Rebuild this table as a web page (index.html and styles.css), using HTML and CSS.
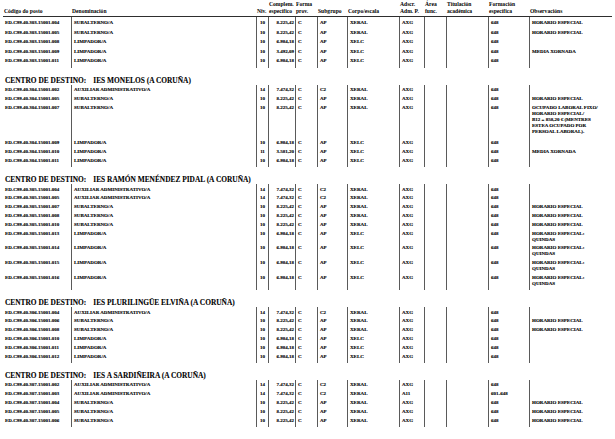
FILE: index.html
```html
<!DOCTYPE html>
<html lang="gl">
<head>
<meta charset="utf-8">
<title>Relación de postos</title>
<link rel="stylesheet" href="styles.css">
</head>
<body>
<div class="page">
  <table class="grid head">
    <colgroup>
      <col class="c1"><col class="c2"><col class="c3"><col class="c4"><col class="c5"><col class="c6"><col class="c7"><col class="c8"><col class="c9"><col class="c10"><col class="c11"><col class="c12">
    </colgroup>
    <tr>
      <th><br>Código do posto</th>
      <th><br>Denominación</th>
      <th><br>Niv.</th>
      <th>Complem.<br>específico</th>
      <th>Forma<br>prov.</th>
      <th><br>Subgrupo</th>
      <th><br>Corpo/escala</th>
      <th>Adscr.<br>Adm. P.</th>
      <th>Área<br>func.</th>
      <th>Titulación<br>académica</th>
      <th>Formación<br>específica</th>
      <th><br>Observacións</th>
    </tr>
  </table>

  <table class="grid data first">
    <colgroup>
      <col class="c1"><col class="c2"><col class="c3"><col class="c4"><col class="c5"><col class="c6"><col class="c7"><col class="c8"><col class="c9"><col class="c10"><col class="c11"><col class="c12">
    </colgroup>
    <tr><td>ED.C99.40.303.15001.004</td><td>SUBALTERNO/A</td><td class="n">10</td><td class="r">8.225,42</td><td>C</td><td>AP</td><td>XERAL</td><td>AXG</td><td></td><td></td><td>648</td><td class="o">HORARIO ESPECIAL</td></tr>
    <tr><td>ED.C99.40.303.15001.005</td><td>SUBALTERNO/A</td><td class="n">10</td><td class="r">8.225,42</td><td>C</td><td>AP</td><td>XERAL</td><td>AXG</td><td></td><td></td><td>648</td><td class="o">HORARIO ESPECIAL</td></tr>
    <tr><td>ED.C99.40.303.15001.008</td><td>LIMPADOR/A</td><td class="n">10</td><td class="r">6.984,18</td><td>C</td><td>AP</td><td>XELC</td><td>AXG</td><td></td><td></td><td>648</td><td class="o"></td></tr>
    <tr><td>ED.C99.40.303.15001.009</td><td>LIMPADOR/A</td><td class="n">10</td><td class="r">3.492,09</td><td>C</td><td>AP</td><td>XELC</td><td>AXG</td><td></td><td></td><td>648</td><td class="o">MEDIA XORNADA</td></tr>
    <tr><td>ED.C99.40.303.15001.011</td><td>LIMPADOR/A</td><td class="n">10</td><td class="r">6.984,18</td><td>C</td><td>AP</td><td>XELC</td><td>AXG</td><td></td><td></td><td>648</td><td class="o"></td></tr>
  </table>

  <h2 class="centro">CENTRO DE DESTINO:<span class="sep"></span>IES MONELOS (A CORUÑA)</h2>
  <table class="grid data">
    <colgroup>
      <col class="c1"><col class="c2"><col class="c3"><col class="c4"><col class="c5"><col class="c6"><col class="c7"><col class="c8"><col class="c9"><col class="c10"><col class="c11"><col class="c12">
    </colgroup>
    <tr><td>ED.C99.40.304.15001.002</td><td>AUXILIAR ADMINISTRATIVO/A</td><td class="n">14</td><td class="r">7.474,32</td><td>C</td><td>C2</td><td>XERAL</td><td>AXG</td><td></td><td></td><td>648</td><td class="o"></td></tr>
    <tr><td>ED.C99.40.304.15001.005</td><td>SUBALTERNO/A</td><td class="n">10</td><td class="r">8.225,42</td><td>C</td><td>AP</td><td>XERAL</td><td>AXG</td><td></td><td></td><td>648</td><td class="o">HORARIO ESPECIAL</td></tr>
    <tr class="tall"><td>ED.C99.40.304.15001.007</td><td>SUBALTERNO/A</td><td class="n">10</td><td class="r">8.225,42</td><td>C</td><td>AP</td><td>XERAL</td><td>AXG</td><td></td><td></td><td>648</td><td class="o">OCUPADO LABORAL FIXO/<br>HORARIO ESPECIAL/<br>B12 = 858,20 € (MENTRES<br>ESTEA OCUPADO POR<br>PERSOAL LABORAL).</td></tr>
    <tr><td>ED.C99.40.304.15001.009</td><td>LIMPADOR/A</td><td class="n">10</td><td class="r">6.984,18</td><td>C</td><td>AP</td><td>XELC</td><td>AXG</td><td></td><td></td><td>648</td><td class="o"></td></tr>
    <tr><td>ED.C99.40.304.15001.010</td><td>LIMPADOR/A</td><td class="n">11</td><td class="r">3.581,20</td><td>C</td><td>AP</td><td>XELC</td><td>AXG</td><td></td><td></td><td>648</td><td class="o">MEDIA XORNADA</td></tr>
    <tr><td>ED.C99.40.304.15001.011</td><td>LIMPADOR/A</td><td class="n">10</td><td class="r">6.984,18</td><td>C</td><td>AP</td><td>XELC</td><td>AXG</td><td></td><td></td><td>648</td><td class="o"></td></tr>
  </table>

  <h2 class="centro">CENTRO DE DESTINO:<span class="sep"></span>IES RAMÓN MENÉNDEZ PIDAL (A CORUÑA)</h2>
  <table class="grid data">
    <colgroup>
      <col class="c1"><col class="c2"><col class="c3"><col class="c4"><col class="c5"><col class="c6"><col class="c7"><col class="c8"><col class="c9"><col class="c10"><col class="c11"><col class="c12">
    </colgroup>
    <tr><td>ED.C99.40.305.15001.004</td><td>AUXILIAR ADMINISTRATIVO/A</td><td class="n">14</td><td class="r">7.474,32</td><td>C</td><td>C2</td><td>XERAL</td><td>AXG</td><td></td><td></td><td>648</td><td class="o"></td></tr>
    <tr><td>ED.C99.40.305.15001.005</td><td>AUXILIAR ADMINISTRATIVO/A</td><td class="n">14</td><td class="r">7.474,32</td><td>C</td><td>C2</td><td>XERAL</td><td>AXG</td><td></td><td></td><td>648</td><td class="o"></td></tr>
    <tr><td>ED.C99.40.305.15001.007</td><td>SUBALTERNO/A</td><td class="n">10</td><td class="r">8.225,42</td><td>C</td><td>AP</td><td>XERAL</td><td>AXG</td><td></td><td></td><td>648</td><td class="o">HORARIO ESPECIAL</td></tr>
    <tr><td>ED.C99.40.305.15001.008</td><td>SUBALTERNO/A</td><td class="n">10</td><td class="r">8.225,42</td><td>C</td><td>AP</td><td>XERAL</td><td>AXG</td><td></td><td></td><td>648</td><td class="o">HORARIO ESPECIAL</td></tr>
    <tr><td>ED.C99.40.305.15001.010</td><td>SUBALTERNO/A</td><td class="n">10</td><td class="r">8.225,42</td><td>C</td><td>AP</td><td>XERAL</td><td>AXG</td><td></td><td></td><td>648</td><td class="o">HORARIO ESPECIAL</td></tr>
    <tr><td>ED.C99.40.305.15001.013</td><td>LIMPADOR/A</td><td class="n">10</td><td class="r">6.984,18</td><td>C</td><td>AP</td><td>XELC</td><td>AXG</td><td></td><td></td><td>648</td><td class="o">HORARIO ESPECIAL:<br>QUINDAS</td></tr>
    <tr><td>ED.C99.40.305.15001.014</td><td>LIMPADOR/A</td><td class="n">10</td><td class="r">6.984,18</td><td>C</td><td>AP</td><td>XELC</td><td>AXG</td><td></td><td></td><td>648</td><td class="o">HORARIO ESPECIAL:<br>QUINDAS</td></tr>
    <tr><td>ED.C99.40.305.15001.015</td><td>LIMPADOR/A</td><td class="n">10</td><td class="r">6.984,18</td><td>C</td><td>AP</td><td>XELC</td><td>AXG</td><td></td><td></td><td>648</td><td class="o">HORARIO ESPECIAL:<br>QUINDAS</td></tr>
    <tr><td>ED.C99.40.305.15001.016</td><td>LIMPADOR/A</td><td class="n">10</td><td class="r">6.984,18</td><td>C</td><td>AP</td><td>XELC</td><td>AXG</td><td></td><td></td><td>648</td><td class="o">HORARIO ESPECIAL:<br>QUINDAS</td></tr>
  </table>

  <h2 class="centro">CENTRO DE DESTINO:<span class="sep"></span>IES PLURILINGÜE ELVIÑA (A CORUÑA)</h2>
  <table class="grid data">
    <colgroup>
      <col class="c1"><col class="c2"><col class="c3"><col class="c4"><col class="c5"><col class="c6"><col class="c7"><col class="c8"><col class="c9"><col class="c10"><col class="c11"><col class="c12">
    </colgroup>
    <tr><td>ED.C99.40.306.15001.004</td><td>AUXILIAR ADMINISTRATIVO/A</td><td class="n">14</td><td class="r">7.474,32</td><td>C</td><td>C2</td><td>XERAL</td><td>AXG</td><td></td><td></td><td>648</td><td class="o"></td></tr>
    <tr><td>ED.C99.40.306.15001.006</td><td>SUBALTERNO/A</td><td class="n">10</td><td class="r">8.225,42</td><td>C</td><td>AP</td><td>XERAL</td><td>AXG</td><td></td><td></td><td>648</td><td class="o">HORARIO ESPECIAL</td></tr>
    <tr><td>ED.C99.40.306.15001.008</td><td>SUBALTERNO/A</td><td class="n">10</td><td class="r">8.225,42</td><td>C</td><td>AP</td><td>XERAL</td><td>AXG</td><td></td><td></td><td>648</td><td class="o">HORARIO ESPECIAL</td></tr>
    <tr><td>ED.C99.40.306.15001.010</td><td>LIMPADOR/A</td><td class="n">10</td><td class="r">6.984,18</td><td>C</td><td>AP</td><td>XELC</td><td>AXG</td><td></td><td></td><td>648</td><td class="o"></td></tr>
    <tr><td>ED.C99.40.306.15001.011</td><td>LIMPADOR/A</td><td class="n">10</td><td class="r">6.984,18</td><td>C</td><td>AP</td><td>XELC</td><td>AXG</td><td></td><td></td><td>648</td><td class="o"></td></tr>
    <tr><td>ED.C99.40.306.15001.012</td><td>LIMPADOR/A</td><td class="n">10</td><td class="r">6.984,18</td><td>C</td><td>AP</td><td>XELC</td><td>AXG</td><td></td><td></td><td>648</td><td class="o"></td></tr>
  </table>

  <h2 class="centro">CENTRO DE DESTINO:<span class="sep"></span>IES A SARDIÑEIRA (A CORUÑA)</h2>
  <table class="grid data">
    <colgroup>
      <col class="c1"><col class="c2"><col class="c3"><col class="c4"><col class="c5"><col class="c6"><col class="c7"><col class="c8"><col class="c9"><col class="c10"><col class="c11"><col class="c12">
    </colgroup>
    <tr><td>ED.C99.40.307.15001.002</td><td>AUXILIAR ADMINISTRATIVO/A</td><td class="n">14</td><td class="r">7.474,32</td><td>C</td><td>C2</td><td>XERAL</td><td>AXG</td><td></td><td></td><td>648</td><td class="o"></td></tr>
    <tr><td>ED.C99.40.307.15001.003</td><td>AUXILIAR ADMINISTRATIVO/A</td><td class="n">14</td><td class="r">7.474,32</td><td>C</td><td>C2</td><td>XERAL</td><td>A11</td><td></td><td></td><td>601-648</td><td class="o"></td></tr>
    <tr><td>ED.C99.40.307.15001.004</td><td>SUBALTERNO/A</td><td class="n">10</td><td class="r">8.225,42</td><td>C</td><td>AP</td><td>XERAL</td><td>AXG</td><td></td><td></td><td>648</td><td class="o">HORARIO ESPECIAL</td></tr>
    <tr><td>ED.C99.40.307.15001.005</td><td>SUBALTERNO/A</td><td class="n">10</td><td class="r">8.225,42</td><td>C</td><td>AP</td><td>XERAL</td><td>AXG</td><td></td><td></td><td>648</td><td class="o">HORARIO ESPECIAL</td></tr>
    <tr><td>ED.C99.40.307.15001.006</td><td>SUBALTERNO/A</td><td class="n">10</td><td class="r">8.225,42</td><td>C</td><td>AP</td><td>XERAL</td><td>AXG</td><td></td><td></td><td>648</td><td class="o">HORARIO ESPECIAL</td></tr>
  </table>
</div>
</body>
</html>
```

FILE: styles.css
```css
html, body {
  margin: 0;
  padding: 0;
  background: #ffffff;
  color: #000000;
}

.page {
  padding: 1px 3px 0 3px;
  font-family: "Liberation Serif", "Times New Roman", serif;
  font-weight: bold;
  color: #000000;
}

.grid {
  width: 609px;
  table-layout: fixed;
  border-collapse: separate;
  border-spacing: 0;
}

.c1 { width: 68px; }
.c2 { width: 185px; }
.c3 { width: 12px; }
.c4 { width: 27px; }
.c5 { width: 22px; }
.c6 { width: 30px; }
.c7 { width: 52px; }
.c8 { width: 25px; }
.c9 { width: 22px; }
.c10 { width: 42px; }
.c11 { width: 41px; }
.c12 { width: 83px; }

/* header */
.head th {
  font-size: 5.6px;
  line-height: 6.8px;
  font-weight: bold;
  text-align: left;
  vertical-align: bottom;
  padding: 0 0 1px 1px;
  white-space: nowrap;
  border-bottom: 1.5px solid #2e2e2e;
}

/* data */
.data td {
  font-size: 5px;
  line-height: 6px;
  padding: 1.4px 1px 1.4px 2px;
  vertical-align: top;
  white-space: nowrap;
  overflow: hidden;
  -webkit-text-stroke: 0.12px #000000;
}

.data td + td {
  border-left: 1px solid #5a5a5a;
}

.first td {
  padding-top: 1.75px;
  padding-bottom: 1.75px;
}

.data tr:first-child td {
  padding-top: 2.4px;
}

.first tr:first-child td {
  padding-top: 3.6px;
}

.data tr:last-child td {
  padding-bottom: 3.4px;
}

.data tr.tall td {
  padding-bottom: 4.4px;
}

.data td.n {
  text-align: center;
  padding-left: 0;
  padding-right: 0;
}

.data td.r {
  text-align: right;
  padding-right: 1px;
}

.data td.o {
  white-space: normal;
}

.centro {
  margin: 8px 0 0 0;
  padding-left: 2px;
  font-size: 7.4px;
  line-height: 9px;
  font-weight: bold;
  -webkit-text-stroke: 0.1px #000000;
}

.sep {
  display: inline-block;
  width: 7px;
}
```
